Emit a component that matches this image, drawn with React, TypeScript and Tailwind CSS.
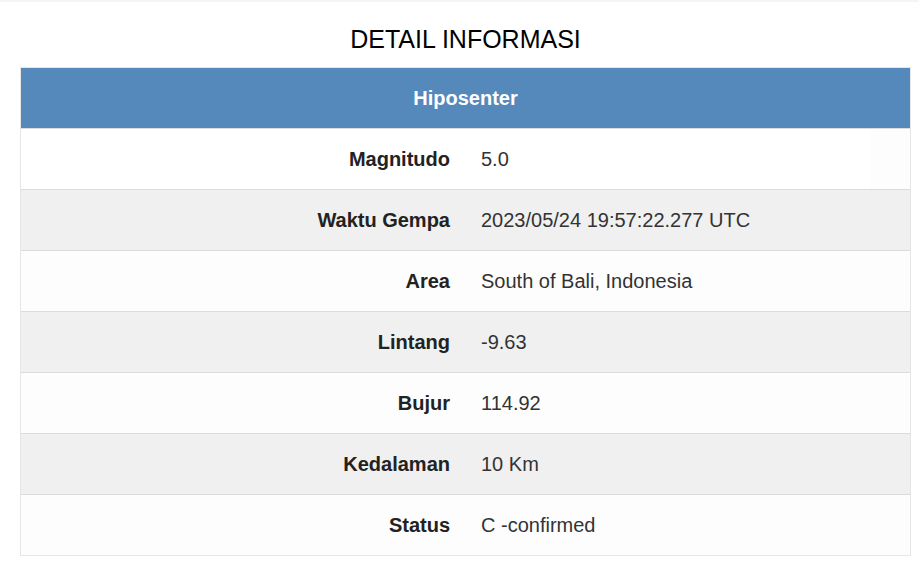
import React from "react";

const rows: [string, string][] = [
  ["Magnitudo", "5.0"],
  ["Waktu Gempa", "2023/05/24 19:57:22.277 UTC"],
  ["Area", "South of Bali, Indonesia"],
  ["Lintang", "-9.63"],
  ["Bujur", "114.92"],
  ["Kedalaman", "10 Km"],
  ["Status", "C -confirmed"],
];

export default function App() {
  return (
    <div className="w-[919px] h-[569px] bg-white text-[#222] font-['Liberation_Sans',Arial,sans-serif]">
      <div className="h-[2px] bg-[#f5f5f5]" />
      <div className="ml-[20px] w-[891px]">
        <div className="h-[65px] flex items-center justify-center pt-[10px]">
          <h1 className="text-[25px] leading-none text-black">DETAIL INFORMASI</h1>
        </div>
        <div className="border border-[#e6e6e6]">
          <div className="h-[60px] bg-[#5588bb] flex items-center justify-center text-white font-bold text-[20px]">
            Hiposenter
          </div>
          {rows.map(([k, v], i) => (
            <div
              key={k}
              className={
                "h-[61px] flex text-[20px] border-t border-[#dcdcdc] " +
                (i % 2 === 0 ? "bg-[#fdfdfd]" : "bg-[#f0f0f0]")
              }
            >
              <div className={"flex-1 flex items-center " + (i === 0 ? "mr-[40px] bg-white" : "")}>
                <div className="w-[444px] shrink-0 text-right pr-[15px] font-bold">{k}</div>
                <div className="pl-[16px] text-[#333]">{v}</div>
              </div>
            </div>
          ))}
        </div>
      </div>
    </div>
  );
}
